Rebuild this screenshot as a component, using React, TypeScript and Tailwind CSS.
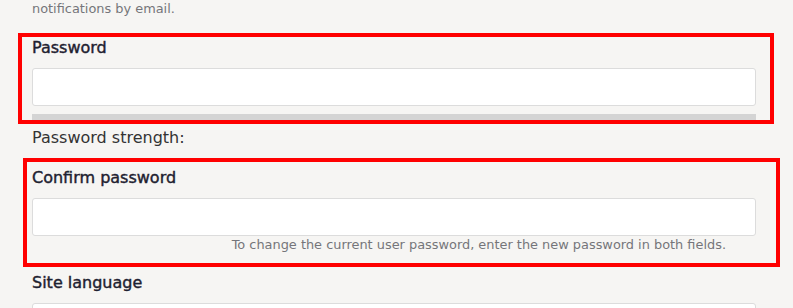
import React from "react";

const font = { fontFamily: '"DejaVu Sans", Verdana, sans-serif' };

function Label({ children }: { children: React.ReactNode }) {
  return (
    <div className="text-[16px] leading-[20px] text-[#1e2130] [-webkit-text-stroke:0.4px_#1e2130]">
      {children}
    </div>
  );
}

function TextInput() {
  return (
    <input
      type="password"
      className="mt-[10px] block h-[38px] w-full rounded-[3px] border border-[#dcdcdc] bg-white"
    />
  );
}

export default function App() {
  return (
    <div style={font} className="relative h-[308px] w-[793px] overflow-hidden bg-[#f6f5f3]">
      <div className="pl-[32px] pr-[37px]">
        {/* tail of the previous field's description */}
        <p className="pt-[1px] text-[12.9px] leading-[16px] text-[#75757a]">notifications by email.</p>

        {/* Password */}
        <div className="mt-[21px]">
          <Label>Password</Label>
          <TextInput />
          <div className="mt-[8px] h-[10px] w-full bg-[#d4d4d4]" />
          <div className="mt-[4px] text-[16px] leading-[20px] text-[#333]">Password strength:</div>
        </div>

        {/* Confirm password */}
        <div className="mt-[20px]">
          <Label>Confirm password</Label>
          <TextInput />
          <p className="mt-[1px] pr-[30px] text-right text-[12.9px] leading-[16px] text-[#75757a]">
            To change the current user password, enter the new password in both fields.
          </p>
        </div>

        {/* Site language */}
        <div className="mt-[20px]">
          <Label>Site language</Label>
          <div className="mt-[10px] h-[38px] w-full rounded-[3px] border border-[#dcdcdc] bg-white" />
        </div>
      </div>

      {/* annotation boxes */}
      <div className="absolute left-[18px] top-[33px] h-[91px] w-[756px] border-4 border-[#ff0000]" />
      <div className="absolute left-[23px] top-[158px] h-[109px] w-[757px] border-4 border-[#ff0000]" />
    </div>
  );
}
